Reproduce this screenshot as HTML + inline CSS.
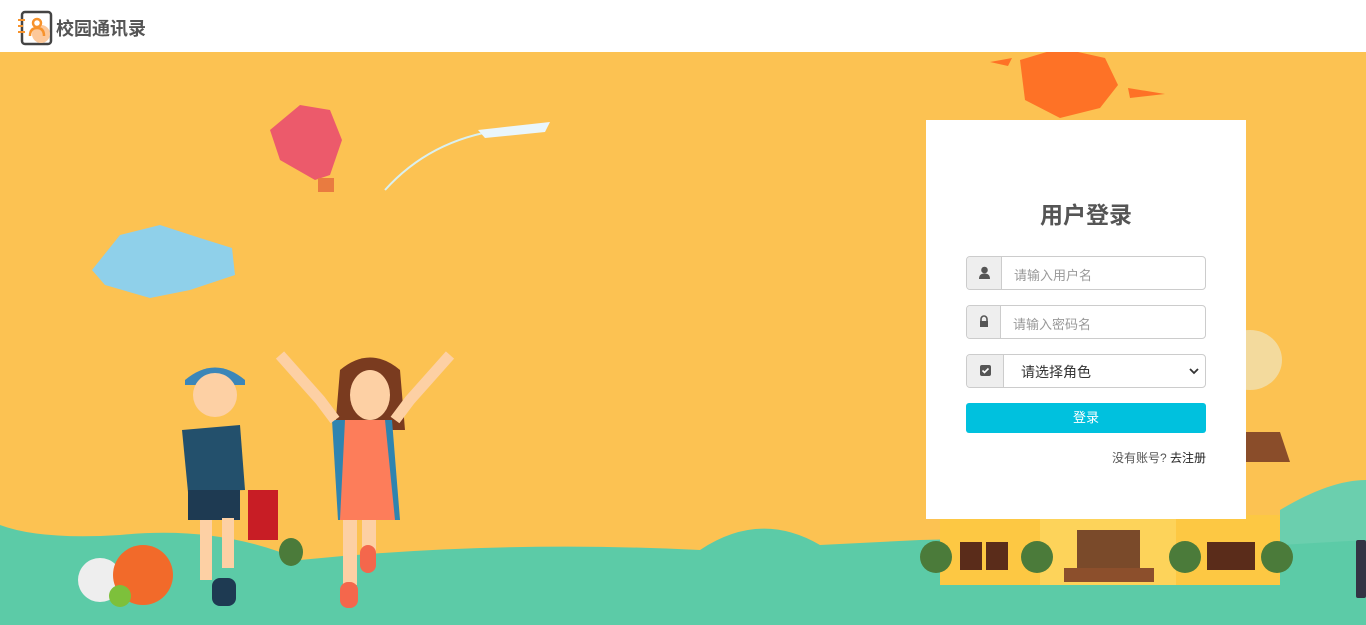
<!DOCTYPE html>
<html><head><meta charset="utf-8">
<style>
*{margin:0;padding:0;box-sizing:border-box}
body{width:1366px;height:625px;overflow:hidden;font-family:"Liberation Sans","Noto Sans CJK SC",sans-serif;background:#fcc252;position:relative}
.hdr{position:absolute;left:0;top:0;width:1366px;height:52px;background:#fff}
.logo{position:absolute;left:56px;top:15px;font-size:18px;font-weight:bold;color:#555}
.bg{position:absolute;left:0;top:52px}
.card{position:absolute;left:926px;top:120px;width:320px;height:399px;background:#fff}
.card h2{position:absolute;top:76px;left:0;width:320px;text-align:center;font-size:23px;color:#555;font-weight:bold}
.grp{position:absolute;left:40px;width:240px;height:34px;border:1px solid #ccc;border-radius:4px;overflow:hidden;background:#fff}
.ad{position:absolute;left:0;top:0;width:35px;height:32px;background:#eee;border-right:1px solid #ccc}
.ph{position:absolute;left:47px;top:8px;font-size:13px;color:#999}
.btn{position:absolute;left:40px;top:283px;width:240px;height:30px;background:#00c1de;border-radius:3px;color:#fff;font-size:13px;text-align:center;line-height:30px}
.reg{position:absolute;right:40px;top:329px;font-size:12px;color:#555}
</style></head><body>
<svg class="bg" width="1366" height="573" viewBox="0 52 1366 573">
<polygon points="1020,60 1060,48 1105,58 1118,85 1100,108 1060,118 1025,100" fill="#fe7226"/>
<polygon points="990,62 1012,58 1008,66" fill="#fe7226"/><polygon points="1128,88 1165,94 1130,98" fill="#fe7226"/>
<ellipse cx="1250" cy="360" rx="32" ry="30" fill="#f0e0b0" opacity=".8"/>
<path d="M270,130 L300,105 L330,110 L342,140 L330,175 L315,180 L280,160 Z" fill="#ec5a6b"/>
<rect x="318" y="178" width="16" height="14" fill="#e97b40"/>
<path d="M385,190 Q430,140 500,130" stroke="#d9f0f0" stroke-width="2" fill="none"/>
<path d="M478,130 L550,122 L545,132 L485,138Z" fill="#eaf6fb"/>
<path d="M92,270 L120,235 L160,225 L200,238 L232,248 L235,275 L190,290 L150,298 L105,285 Z" fill="#8fd0ea"/>
<path d="M0,525 Q40,540 120,535 Q220,525 300,560 Q500,540 700,550 Q760,510 820,545 L920,540 L1366,530 L1366,625 L0,625Z" fill="#5ccba7"/>
<path d="M1280,510 Q1330,480 1366,480 L1366,540 L1280,545Z" fill="#6bcfae"/>
<rect x="940" y="515" width="340" height="70" fill="#fdc843"/>
<rect x="1040" y="490" width="136" height="95" fill="#fdd35a"/>
<rect x="1077" y="530" width="63" height="45" fill="#7a4a2a"/>
<rect x="1064" y="568" width="90" height="14" fill="#8c4f2c"/>
<polygon points="1240,432 1280,432 1290,462 1240,462" fill="#8a4d2a"/>
<rect x="960" y="542" width="22" height="28" fill="#5a2c1a"/><rect x="986" y="542" width="22" height="28" fill="#5a2c1a"/>
<rect x="1207" y="542" width="48" height="28" fill="#5a2c1a"/>
<g fill="#4b7b3a"><ellipse cx="936" cy="557" rx="16" ry="16"/><ellipse cx="1037" cy="557" rx="16" ry="16"/><ellipse cx="1185" cy="557" rx="16" ry="16"/><ellipse cx="1277" cy="557" rx="16" ry="16"/><ellipse cx="291" cy="552" rx="12" ry="14"/></g>
<circle cx="100" cy="580" r="22" fill="#eee"/><circle cx="143" cy="575" r="30" fill="#f26a2a"/>
<circle cx="120" cy="596" r="11" fill="#7dc03b"/>
<path d="M185,380 Q215,355 245,380 L245,385 L185,385Z" fill="#3b86b8"/>
<circle cx="215" cy="395" r="22" fill="#fdd0a4"/>
<path d="M182,430 L240,425 L245,490 L188,492Z" fill="#23506c"/>
<rect x="188" y="490" width="52" height="30" fill="#1e3a52"/>
<rect x="200" y="520" width="12" height="60" fill="#fdd0a4"/><rect x="222" y="518" width="12" height="50" fill="#fdd0a4"/>
<rect x="212" y="578" width="24" height="28" rx="8" fill="#1e3a52"/>
<rect x="248" y="490" width="30" height="50" fill="#c81d25"/>
<path d="M340,370 Q370,345 400,370 L405,430 L335,430Z" fill="#7a3b1f"/>
<ellipse cx="370" cy="395" rx="20" ry="25" fill="#fdd0a4"/>
<path d="M332,420 L392,420 L400,520 L338,520Z" fill="#2f84b0"/>
<path d="M345,420 L385,420 L395,520 L340,520Z" fill="#fd7d5a"/>
<rect x="343" y="520" width="14" height="65" fill="#fdd0a4"/><rect x="362" y="520" width="14" height="35" fill="#fdd0a4"/>
<rect x="340" y="582" width="18" height="26" rx="8" fill="#f4674c"/><rect x="360" y="545" width="16" height="28" rx="8" fill="#f4674c"/>
<path d="M280,355 L320,400 L335,420" stroke="#fdd0a4" stroke-width="11" fill="none"/>
<path d="M450,355 L410,400 L395,420" stroke="#fdd0a4" stroke-width="11" fill="none"/>
<rect x="1356" y="540" width="10" height="58" rx="2" fill="#334"/>
</svg>
<div class="hdr">
<svg style="position:absolute;left:17px;top:10px" width="36" height="36" viewBox="0 0 36 36"><rect x="5" y="2" width="29" height="32" rx="3" fill="none" stroke="#444" stroke-width="2.5"/><circle cx="24" cy="24" r="9" fill="#fcc89a"/><circle cx="20" cy="13" r="4" fill="none" stroke="#f7932c" stroke-width="2.5"/><path d="M13,26 Q13,18 20,18 Q27,18 27,26" fill="none" stroke="#f7932c" stroke-width="2.5"/><path d="M1,10h7M1,16h5M1,22h7" stroke="#f7932c" stroke-width="2"/></svg>
<div class="logo">校园通讯录</div></div>
<div class="card">
<h2>用户登录</h2>
<div class="grp" style="top:136px"><div class="ad"><svg width="35" height="32"><circle cx="17.5" cy="13" r="3.3" fill="#555"/><path d="M12,22 Q12,16.5 17.5,16.5 Q23,16.5 23,22Z" fill="#555"/></svg></div><div class="ph">请输入用户名</div></div>
<div class="grp" style="top:185px"><div class="ad" style="width:34px"><svg width="34" height="32"><path d="M14,15v-2a3,3 0 0 1 6,0v2" stroke="#555" stroke-width="1.6" fill="none"/><rect x="13" y="15" width="8" height="6" fill="#555"/></svg></div><div class="ph" style="left:46px">请输入密码名</div></div>
<div class="grp" style="top:234px"><div class="ad" style="width:37px"><svg width="37" height="32"><rect x="13" y="10" width="11" height="11" rx="2" fill="#555"/><path d="M15.5,15.5l2,2l4,-4" stroke="#fff" stroke-width="1.6" fill="none"/></svg></div><div class="ph" style="left:54px;color:#333;font-size:14px;top:7px">请选择角色</div><svg style="position:absolute;right:6px;top:12px" width="10" height="8"><path d="M1,2l4,4l4,-4" stroke="#333" stroke-width="1.8" fill="none"/></svg></div>
<div class="btn">登录</div>
<div class="reg">没有账号? <span style="color:#222">去注册</span></div>
</div>
</body></html>
